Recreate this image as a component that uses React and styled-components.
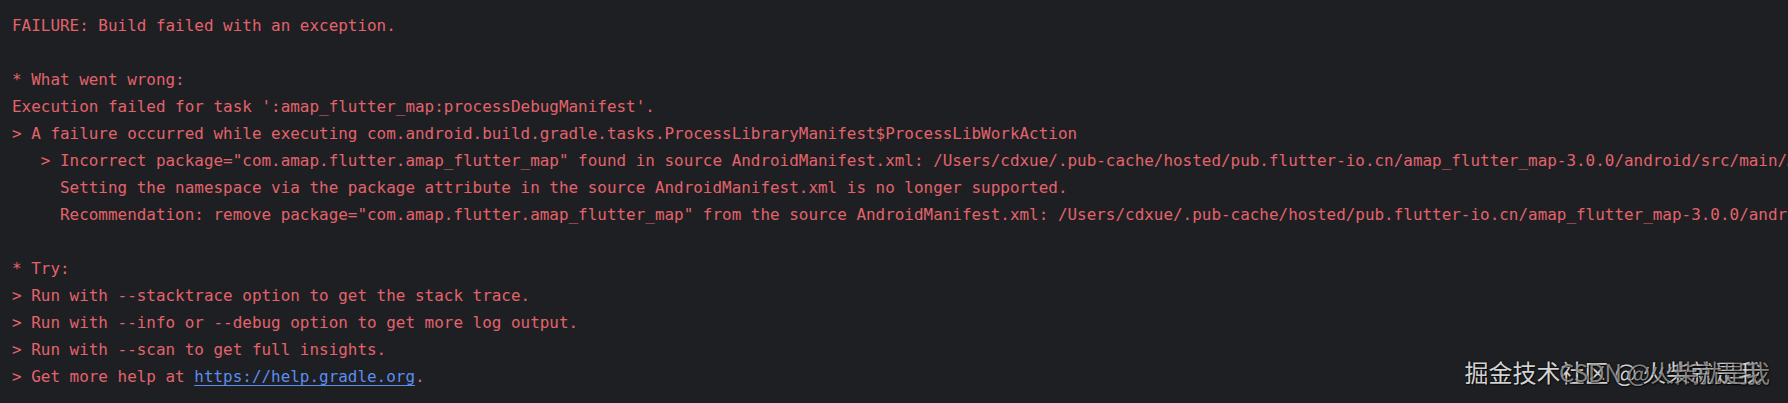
// Packages
import React from "react"
import styled, { createGlobalStyle } from "styled-components"

// Data
const Lines = [
    { text: "FAILURE: Build failed with an exception." },
    { text: "" },
    { text: "* What went wrong:" },
    { text: "Execution failed for task ':amap_flutter_map:processDebugManifest'." },
    {
        text: "> A failure occurred while executing com.android.build.gradle.tasks.ProcessLibraryManifest$ProcessLibWorkAction",
    },
    {
        text: '   > Incorrect package="com.amap.flutter.amap_flutter_map" found in source AndroidManifest.xml: /Users/cdxue/.pub-cache/hosted/pub.flutter-io.cn/amap_flutter_map-3.0.0/android/src/main/AndroidManifest.xml.',
    },
    {
        text: "     Setting the namespace via the package attribute in the source AndroidManifest.xml is no longer supported.",
    },
    {
        text: '     Recommendation: remove package="com.amap.flutter.amap_flutter_map" from the source AndroidManifest.xml: /Users/cdxue/.pub-cache/hosted/pub.flutter-io.cn/amap_flutter_map-3.0.0/android/src/main/AndroidManifest.xml.',
    },
    { text: "" },
    { text: "* Try:" },
    { text: "> Run with --stacktrace option to get the stack trace." },
    { text: "> Run with --info or --debug option to get more log output." },
    { text: "> Run with --scan to get full insights." },
    { text: "> Get more help at ", link: "https://help.gradle.org", after: "." },
]

// Styles
const GlobalStyle = createGlobalStyle`
    html, body {
        margin: 0;
        padding: 0;
        background-color: #1e1f22;
        overflow: hidden;
    }
`

const Console = styled.div`
    position: relative;
    width: 1788px;
    height: 403px;
    overflow: hidden;
    box-sizing: border-box;
    padding: 12px 0 0 12px;
    background-color: #1e1f22;
`

const Output = styled.pre`
    margin: 0;
    font-family: "DejaVu Sans Mono", "Liberation Mono", monospace;
    font-size: 15.95px;
    line-height: 27px;
    color: #e3636c;
    white-space: pre;
`

const Line = styled.div`
    height: 27px;
`

const Link = styled.a`
    color: #5b8def;
    text-decoration: underline;
    text-underline-offset: 3px;
`

const Watermark = styled.div`
    position: absolute;
    right: ${(props) => props.right}px;
    bottom: 18px;
    font-family: "Noto Sans CJK SC", "Noto Sans", sans-serif;
    font-size: 24px;
    line-height: 26px;
    white-space: nowrap;
    color: ${(props) => (props.faint ? "rgba(235, 235, 235, 0.55)" : "rgba(240, 240, 240, 0.88)")};
    text-shadow: 0 0 2px rgba(0, 0, 0, 0.8), 1px 1px 1px rgba(0, 0, 0, 0.6);
`

export default function App() {
    return (
        <>
            <GlobalStyle />
            <Console>
                <Output>
                    {Lines.map((line, i) => (
                        <Line key={i}>
                            {line.text}
                            {line.link && <Link href={line.link}>{line.link}</Link>}
                            {line.after}
                        </Line>
                    ))}
                </Output>

                <Watermark right={26}>掘金技术社区 @ 火柴就是我</Watermark>
                <Watermark right={18} faint>
                    CSDN @火柴就是我
                </Watermark>
            </Console>
        </>
    )
}
